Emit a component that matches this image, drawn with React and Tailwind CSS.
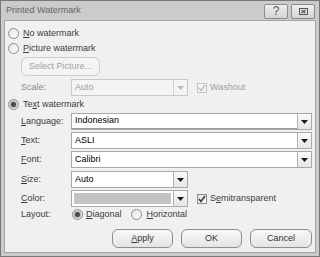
import React from 'react';

const U = ({ children }) => <span className="underline underline-offset-[1px]">{children}</span>;

const Radio = ({ checked }) => (
  <span className="w-[11px] h-[11px] rounded-full border border-[#8c8c8c] bg-gradient-to-br from-[#e4e4e4] to-[#ffffff] flex items-center justify-center shrink-0">
    {checked && <span className="w-[5px] h-[5px] rounded-full bg-[#4d4d4d] shadow-[0_0_2px_1px_#9a9a9a]"></span>}
  </span>
);

const Check = ({ disabled }) => (
  <span
    className={
      'w-[10px] h-[10px] border flex items-center justify-center shrink-0 ' +
      (disabled ? 'border-[#c4c4c4] bg-[#f4f4f4]' : 'border-[#8c8c8c] bg-gradient-to-br from-[#dcdcdc] to-[#ffffff]')
    }
  >
    <svg width="8" height="8" viewBox="0 0 8 8">
      <path d="M1 4 L3 6.5 L7 1" fill="none" stroke={disabled ? '#c0c0c0' : '#3a3a3a'} strokeWidth="1.6" />
    </svg>
  </span>
);

const Arrow = ({ disabled }) => (
  <span
    className={
      'w-[14px] h-full border-l flex items-center justify-center shrink-0 ' +
      (disabled ? 'border-[#d0d0d0] bg-[#f4f4f4]' : 'border-[#b0b0b0] bg-gradient-to-b from-[#fafafa] to-[#e6e6e6]')
    }
  >
    <svg width="7" height="4" viewBox="0 0 7 4">
      <path d="M0 0 H7 L3.5 4 Z" fill={disabled ? '#b8b8b8' : '#1a1a1a'} />
    </svg>
  </span>
);

const Combo = ({ value, wide, disabled, focus, color }) => (
  <div
    className={
      'h-[17px] border flex ' +
      (wide ? 'w-[241px] ' : 'w-[117px] ') +
      (disabled ? 'border-[#c8c8c8] bg-[#f4f4f4]' : 'border-[#a9a9a9] bg-white')
    }
  >
    {color ? (
      <div className="flex-1 p-[2px]">
        <div className="w-full h-full bg-[#c3c3c3]"></div>
      </div>
    ) : (
      <div
        className={
          'flex-1 flex items-center pl-[3px] ' +
          (disabled ? 'text-[#9c9c9c] ' : 'text-black ') +
          (focus ? 'border-b border-[#9a9a9a]' : '')
        }
      >
        {value}
      </div>
    )}
    <Arrow disabled={disabled} />
  </div>
);

const Btn = ({ children, disabled, w }) => (
  <div
    className={
      'h-[19px] rounded-[6px] border flex items-center justify-center ' +
      w +
      (disabled
        ? ' border-[#cdcdcd] bg-[#f4f4f4] text-[#a3a3a3]'
        : ' border-[#8e8e8e] bg-gradient-to-b from-[#f8f8f8] to-[#e4e4e4] text-[#333]')
    }
  >
    {children}
  </div>
);

const Field = ({ label, children, mt }) => (
  <div className={'flex items-center ' + mt}>
    <span className="w-[50px] ml-[16px]">{label}</span>
    {children}
  </div>
);

export default function App() {
  return (
    <div className="w-[320px] h-[257px] bg-[#cbcbcb] border border-[#787878] flex flex-col font-['Liberation_Sans',sans-serif] text-[9px] text-[#3c3c3c]">
      <div className="h-[19px] flex items-center justify-between pl-[5px] pr-[4px]">
        <span className="text-[#666]">Printed Watermark</span>
        <div className="flex gap-[3px] mt-[1px]">
          <div className="w-[24px] h-[15px] rounded-[2px] border border-[#8a8a8a] bg-gradient-to-b from-[#f0f0f0] to-[#d4d4d4] flex items-center justify-center text-[12px] text-[#555]">
            ?
          </div>
          <div className="w-[24px] h-[15px] rounded-[2px] border border-[#8a8a8a] bg-gradient-to-b from-[#f0f0f0] to-[#d4d4d4] flex items-center justify-center">
            <svg width="9" height="7" viewBox="0 0 9 7">
              <rect x="0.5" y="0.5" width="8" height="6" fill="none" stroke="#555" />
              <path d="M2.5 2 L6.5 5 M6.5 2 L2.5 5" stroke="#555" strokeWidth="1.2" />
            </svg>
          </div>
        </div>
      </div>
      <div className="flex-1 mx-[3px] mb-[3px] bg-[#f0f0f0] border border-[#a6a6a6] flex flex-col">
        <div className="h-[15px] mt-[5px] flex items-center gap-[4px] pl-[3px]">
          <Radio />
          <span><U>N</U>o watermark</span>
        </div>
        <div className="h-[15px] flex items-center gap-[4px] pl-[3px]">
          <Radio />
          <span><U>P</U>icture watermark</span>
        </div>
        <div className="ml-[16px] mt-[1px]">
          <Btn disabled w="w-[79px]">Select Picture...</Btn>
        </div>
        <Field label={<span className="text-[#8a8a8a]">Scale:</span>} mt="mt-[3px]">
          <Combo value="Auto" disabled />
          <div className="flex items-center gap-[3px] ml-[9px] text-[#a0a0a0]">
            <Check disabled />
            <span>Washout</span>
          </div>
        </Field>
        <div className="h-[15px] mt-[1px] flex items-center gap-[4px] pl-[3px]">
          <Radio checked />
          <span>Te<U>x</U>t watermark</span>
        </div>
        <Field label={<span><U>L</U>anguage:</span>} mt="mt-[1px]">
          <Combo value="Indonesian" wide focus />
        </Field>
        <Field label={<span><U>T</U>ext:</span>} mt="mt-[2px]">
          <Combo value="ASLI" wide />
        </Field>
        <Field label={<span><U>F</U>ont:</span>} mt="mt-[2px]">
          <Combo value="Calibri" wide />
        </Field>
        <Field label={<span><U>S</U>ize:</span>} mt="mt-[3px]">
          <Combo value="Auto" />
        </Field>
        <Field label={<span><U>C</U>olor:</span>} mt="mt-[2px]">
          <Combo color />
          <div className="flex items-center gap-[3px] ml-[9px]">
            <Check />
            <span>S<U>e</U>mitransparent</span>
          </div>
        </Field>
        <div className="h-[15px] flex items-center">
          <span className="w-[51px] ml-[16px]">Layout:</span>
          <Radio checked />
          <span className="ml-[3px]"><U>D</U>iagonal</span>
          <span className="ml-[9px]"><Radio /></span>
          <span className="ml-[5px]"><U>H</U>orizontal</span>
        </div>
        <div className="mt-[7px] flex justify-end gap-[8px] pr-[3px]">
          <Btn w="w-[61px]"><span><U>A</U>pply</span></Btn>
          <Btn w="w-[61px]">OK</Btn>
          <Btn w="w-[62px]">Cancel</Btn>
        </div>
      </div>
    </div>
  );
}
